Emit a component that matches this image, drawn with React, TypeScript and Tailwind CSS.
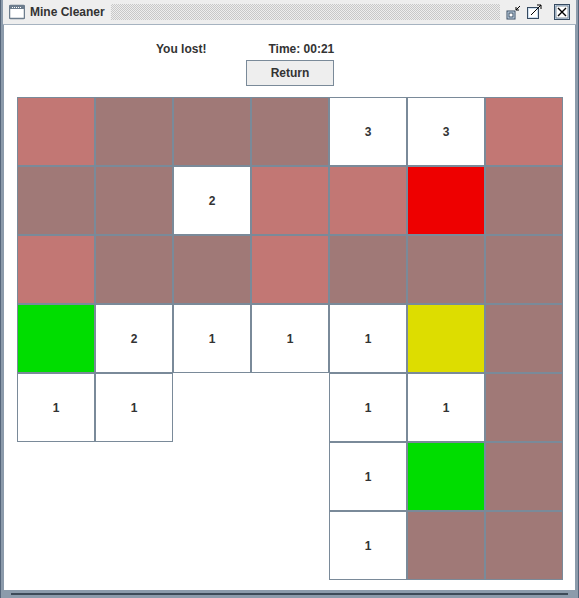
import React from "react"

type Cell = "p" | "m" | "r" | "g" | "y" | "e" | number

const board: Cell[][] = [
  ["p", "m", "m", "m", 3, 3, "p"],
  ["m", "m", 2, "p", "p", "r", "m"],
  ["p", "m", "m", "p", "m", "m", "m"],
  ["g", 2, 1, 1, 1, "y", "m"],
  [1, 1, "e", "e", 1, 1, "m"],
  ["e", "e", "e", "e", 1, "g", "m"],
  ["e", "e", "e", "e", 1, "m", "m"],
]

const fills: Record<string, string> = {
  p: "bg-[#c27774] border border-[#7a8a99]",
  m: "bg-[#a07977] border border-[#7a8a99]",
  r: "bg-[#ee0000] border border-[#7a8a99]",
  g: "bg-[#00dd00] border border-[#7a8a99]",
  y: "bg-[#dddd00] border border-[#7a8a99]",
  e: "bg-white",
}

function TitleIcons() {
  return (
    <div className="flex items-center gap-[4px] pr-[6px]">
      <svg width="16" height="16" viewBox="0 0 16 16">
        <rect x="1" y="7" width="8" height="8" fill="#cfe0f0" stroke="#364a60" />
        <rect x="3" y="9" width="4" height="4" fill="#fff" stroke="#364a60" />
        <path d="M14 2 L10 6 M10 3 L10 6 L13 6" stroke="#000" fill="none" />
      </svg>
      <svg width="16" height="16" viewBox="0 0 16 16" className="mr-[8px]">
        <rect x="1.5" y="3.5" width="11" height="11" fill="#cfe0f0" stroke="#364a60" />
        <rect x="3" y="5" width="8" height="8" fill="#fff" />
        <path d="M5 11 L15 1 M11 1 L15 1 L15 5" stroke="#000" fill="none" />
      </svg>
      <svg width="16" height="16" viewBox="0 0 16 16">
        <rect x="0.5" y="0.5" width="15" height="15" fill="#cfe0f0" stroke="#364a60" />
        <rect x="2" y="2" width="12" height="12" fill="#fff" stroke="#364a60" strokeWidth="0.6" />
        <path d="M4 4 L12 12 M12 4 L4 12" stroke="#000" strokeWidth="1.4" />
      </svg>
    </div>
  )
}

export default function App() {
  return (
    <div className="w-[579px] h-[598px] bg-[#8c9bab] flex flex-col border-l border-r border-[#55657a] font-['Liberation_Sans',Arial,sans-serif]">
      <div className="h-[25px] shrink-0 bg-[#eeeeee] border-b border-[#a6b3c0] flex items-center mx-[2px]">
        <svg width="16" height="16" viewBox="0 0 16 16" className="ml-[6px] mr-[5px]">
          <rect x="0.5" y="1.5" width="15" height="13" rx="1" fill="#fff" stroke="#6d7d8d" strokeWidth="1.5" />
          <rect x="1" y="2" width="14" height="3" fill="#6d7d8d" />
          <path d="M3 3.5 H13" stroke="#fff" strokeDasharray="1 1" />
        </svg>
        <span className="text-[12px] font-bold text-[#333333] mr-[6px]">Mine Cleaner</span>
        <div className="flex-1 h-[16px] bg-[conic-gradient(#c8c8c8_25%,transparent_0_50%,#c8c8c8_0_75%,transparent_0)] bg-size-[2px_2px] mr-[6px]" />
        <TitleIcons />
      </div>
      <div className="flex-1 bg-white mx-[3px] flex flex-col">
        <div className="flex text-[12px] font-bold text-[#333333] pt-[15px] h-[35px]">
          <span className="ml-[152px]">You lost!</span>
          <span className="ml-[62px]">Time: 00:21</span>
        </div>
        <div className="flex justify-center pl-[1px]">
          <button className="w-[88px] h-[26px] bg-[#eeeeee] border border-[#7a8a99] text-[12px] font-bold text-[#333333]">
            Return
          </button>
        </div>
        <div className="grid grid-cols-[repeat(7,78px)] grid-rows-[repeat(7,69px)] ml-[13px] mt-[11px]">
          {board.flat().map((c, i) =>
            typeof c === "number" ? (
              <div
                key={i}
                className="bg-white border border-[#7a8a99] flex items-center justify-center text-[12px] font-bold text-[#333333]"
              >
                {c}
              </div>
            ) : (
              <div key={i} className={fills[c]} />
            )
          )}
        </div>
      </div>
      <div className="h-[8px] shrink-0 flex flex-col justify-center px-[10px]">
        <div className="h-[2px] bg-[#3d4a58]" />
      </div>
    </div>
  )
}
